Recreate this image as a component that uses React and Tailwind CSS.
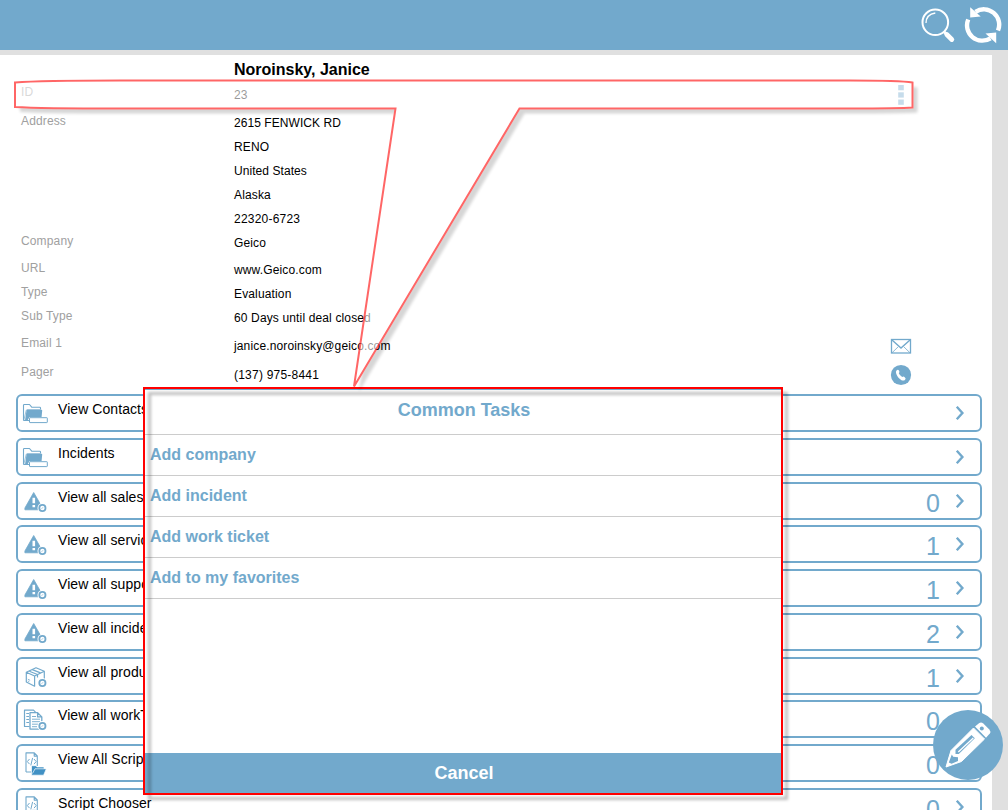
import React from 'react';

const details = [
  { label: '', value: 'Noroinsky, Janice', h: 'h-[26px]', bold: true },
  { label: 'ID', value: '23', h: 'h-[28px]', shift: '-mt-[3px]', icon: 'menu' },
  { label: 'Address', value: '2615 FENWICK RD', h: 'h-6', shift: '-mt-[2px]', tight: true },
  { label: '', value: 'RENO', h: 'h-6' },
  { label: '', value: 'United States', h: 'h-6', tight: true },
  { label: '', value: 'Alaska', h: 'h-6' },
  { label: '', value: '22320-6723', h: 'h-6', loose: true },
  { label: 'Company', value: 'Geico', h: 'h-[27px]', shift: '-mt-[2px]' },
  { label: 'URL', value: 'www.Geico.com', h: 'h-6', shift: '-mt-[2px]' },
  { label: 'Type', value: 'Evaluation', h: 'h-6', shift: '-mt-[2px]' },
  { label: 'Sub Type', value: '60 Days until deal closed', h: 'h-[28px]', shift: '-mt-[2px]' },
  { label: 'Email 1', value: 'janice.noroinsky@geico.com', h: 'h-[29px]', shift: '-mt-[3px]', icon: 'mail' },
  { label: 'Pager', value: '(137) 975-8441', h: 'h-[27px]', shift: '-mt-[3px]', icon: 'phone', loose: true },
];

const links = [
  { text: 'View Contacts', icon: 'folder' },
  { text: 'Incidents', icon: 'folder' },
  { text: 'View all sales', icon: 'alert', count: 0 },
  { text: 'View all service', icon: 'alert', count: 1 },
  { text: 'View all support', icon: 'alert', count: 1 },
  { text: 'View all incidents', icon: 'alert', count: 2 },
  { text: 'View all products', icon: 'box', count: 1 },
  { text: 'View all workTickets', icon: 'docs', count: 0 },
  { text: 'View All Scripts', icon: 'script', count: 0 },
  { text: 'Script Chooser', icon: 'script', count: 0 },
];

const tasks = ['Add company', 'Add incident', 'Add work ticket', 'Add to my favorites'];

function valueClass(d) {
  if (d.bold) return 'w-[656px] pt-px text-[16px] font-bold tracking-normal';
  if (d.tight) return 'w-[656px] tracking-[0.06px]';
  if (d.loose) return 'w-[656px] tracking-[0.22px]';
  return 'w-[656px]';
}

function Badge() {
  return (
    <>
      <circle cx="20.4" cy="18" r="4.9" fill="#fff" stroke="none" />
      <circle cx="20.4" cy="18" r="3.1" fill="#fff" strokeWidth="1.8" />
      <path d="M20.900 17.400l-1.200 1.300" strokeWidth="0.800" />
    </>
  );
}

function LinkIcon({ name }) {
  return (
    <svg className="h-[26px] w-[26px] shrink-0" viewBox="0 0 26 26" fill="none" stroke="#72a9cc" strokeLinejoin="round">
      {name === 'folder' && (
        <>
          <path d="M1.500 18.500V3.300q0-.8.8-.8h5.200l2.200 2.700h8q.8 0 .8.800v1.500M1.500 18.500h5.500" strokeWidth="1.100" />
          <path d="M1.800 18.200L4.200 8.500q.2-.8 1-.8h13.200" strokeWidth="0.700" />
          <path d="M5.300 7.800h14.200q.8 0 .7.800l-.6 6.500H7.500l-2 3.300H3L4.500 8.500q.1-.7.800-.7z" fill="#72a9cc" stroke="none" />
          <rect x="7.500" y="15.700" width="17.800" height="4.900" rx="0.500" fill="#fff" strokeWidth="1" />
        </>
      )}
      {name === 'alert' && (
        <>
          <path d="M11.700 2.500L19.200 15.500v4.300H2.900V18z" fill="#72a9cc" strokeWidth="0.800" />
          <path d="M10.500 7.800h2.600v5.500h-2.600zM10.500 15h2.600v2.300h-2.600z" fill="#fff" stroke="none" />
          <Badge />
        </>
      )}
      {name === 'box' && (
        <>
          <path d="M4.300 7.300L14 2.800l8.300 3.500-9.700 4.700zM4.300 7.300v9.700l8.300 4.200V11M22.300 6.300v8" strokeWidth="1.200" />
          <path d="M7.300 6.300l8.200 3.200v3M10.300 4.600l8.200 3.300" strokeWidth="1.200" />
          <path d="M5.800 14.200l2.300 1.100M5.800 16l1.500.7" strokeWidth="0.800" />
          <Badge />
        </>
      )}
      {name === 'docs' && (
        <>
          <path d="M7.500 18.500H2.500V2.200h9l2 2" strokeWidth="1.200" />
          <path d="M4.300 5.500h2.700M4.300 8.500h2.700M4.300 11.500h2.700M4.300 14.500h2.700" strokeWidth="1" />
          <path d="M8 4.700h7.600l4.200 4.200v12.200H8zM15.600 4.700v4.200h4.200" fill="#fff" strokeWidth="1.300" />
          <path d="M10 8.500h4M10 11.200h8M10 13.700h8M10 16.200h6M10 18.700h5" strokeWidth="0.900" />
          <Badge />
        </>
      )}
      {name === 'script' && (
        <>
          <path d="M4 20V.9h8.300l3 3v10M12.200.9v3.200h3.100M4 20h6" strokeWidth="1.100" />
          <path d="M7.500 7L5.300 9.600l2.200 2.500M12 7l2.200 2.600-2.200 2.500M10.600 5.900L8.800 13.400" strokeWidth="1" />
          <path d="M9.500 23V13.700h4.500l1 1.200h7v1.800l2.300.2-2.700 6.300H10z" fill="#4191c4" stroke="#fff" strokeWidth="0.700" />
          <path d="M10.500 21.500l2.500-4.700h9" stroke="#fff" strokeWidth="0.700" />
        </>
      )}
    </svg>
  );
}

function DetailIcon({ name }) {
  if (name === 'menu') {
    return (
      <svg className="-mt-[3px] h-[22px] w-[22px]" viewBox="0 0 22 22" fill="#72a9cc">
        <rect x="8.200" y="1" width="5.600" height="5.300" />
        <rect x="8.200" y="8.300" width="5.600" height="5.300" />
        <rect x="8.200" y="15.500" width="5.600" height="5.300" />
      </svg>
    );
  }
  if (name === 'mail') {
    return (
      <svg className="-mt-[3px] h-[22px] w-[22px]" viewBox="0 0 22 22" fill="none" stroke="#72a9cc">
        <rect x="1.500" y="4.500" width="19" height="13.500" strokeWidth="1.300" />
        <path d="M2 5l9 8 9-8" strokeWidth="1.400" />
        <path d="M2 17.800l6.200-6M20 17.800l-6.200-6" strokeWidth="0.800" />
      </svg>
    );
  }
  return (
    <svg className="-mt-[3px] h-[22px] w-[22px]" viewBox="0 0 22 22">
      <circle cx="11" cy="11" r="10.100" fill="#72a9cc" />
      <path d="M6.500 6.400q1.500-1.300 2.600.3.900 1.400-.3 2.600 1 2.400 3.400 3.800 1.300-1 2.500.1 1.700 1.300.4 2.500-1.400 1.400-3.600.5Q7.300 13.700 6.100 9.300q-.5-1.800.4-2.900z" fill="#fff" />
    </svg>
  );
}

const callout = 'M15 82.500Q40 80.500 120 80.500H850Q900 80.500 912.500 82.500V107.500Q900 108.500 850 108.500H519.500L354 386.500 395.500 108.500H120Q40 108.500 15 107Z';

export default function App() {
  return (
    <div className="relative h-[810px] w-[1008px] overflow-hidden bg-[#e0e0e0] font-['Liberation_Sans',Arial,sans-serif] text-black">
      <header className="flex h-[50px] items-center justify-end gap-[8px] bg-[#72a9cc] pr-[6px]">
        <svg className="h-[38px] w-[38px]" viewBox="0 0 38 38" fill="none" stroke="#fff">
          <circle cx="17.300" cy="16.300" r="12.800" strokeWidth="2" />
          <path d="M8 17q.1-8.500 9.300-10" strokeWidth="1.300" />
          <path d="M26.300 26l2.500 2.500" strokeWidth="3" />
          <path d="M28.800 28.500l5 5" strokeWidth="4.800" strokeLinecap="round" />
        </svg>
        <svg className="h-[38px] w-[38px]" viewBox="0 0 38 38" fill="none" stroke="#fff">
          <path d="M11.500 5.800A15.300 15.300 0 0 1 34 24.500" strokeWidth="4.400" />
          <path d="M26.500 32.300A15.300 15.300 0 0 1 4.200 13.500" strokeWidth="4.400" />
          <path d="M6.200 1.200L6.200 11.500 16.700 10.500z M32.200 37.200L32.200 26.500 21.500 27.500z" fill="#fff" stroke="none" />
        </svg>
      </header>

      <main className="mt-[5px] h-[755px] w-[992px] bg-white pt-[6px]">
        <section className="pl-[21px]">
          {details.map((d) => (
            <div key={d.value} className={`flex items-start text-[12px] leading-4 tracking-[0.14px] ${d.h}`}>
              <div className={`w-[213px] shrink-0 text-[#a0a0a0] ${d.shift || ''}`}>{d.label}</div>
              <div className={valueClass(d)}>{d.value}</div>
              {d.icon && <DetailIcon name={d.icon} />}
            </div>
          ))}
        </section>

        <section className="flex flex-col gap-[5.75px] pl-4">
          {links.map((l) => (
            <div key={l.text} className="flex h-[38px] w-[966px] shrink-0 rounded-[6px] border-2 border-[#72a9cc] pl-[4px]">
              <div className="pt-[6px]"><LinkIcon name={l.icon} /></div>
              <div className="flex-1 whitespace-nowrap pl-[10px] pt-[4px] text-[14px] leading-[18px] tracking-[0.07px]">{l.text}</div>
              <div className="pt-[4px] text-[25px] leading-[30px] text-[#72a9cc]">{l.count}</div>
              <svg className="ml-[15px] mr-[15px] mt-[10px] h-[14px] w-[10px]" viewBox="0 0 10 14" fill="none" stroke="#72a9cc" strokeWidth="2.400">
                <path d="M1.800 .8l5.600 6.200-5.600 6.200" />
              </svg>
            </div>
          ))}
        </section>
      </main>

      <button className="absolute left-[933px] top-[710px] h-[70px] w-[70px] rounded-full bg-[#72a9cc]">
        <svg className="h-[70px] w-[70px]" viewBox="0 0 70 70">
          <path d="M13 57L18 40.500 40.500 18 51.500 29 28.500 51.500z" fill="#fff" stroke="#fff" strokeLinejoin="round" />
          <path d="M42 16.500l4.300-3.500q2-1.200 4 .5l6 6q1.800 2 .5 4l-3.800 4.300z" fill="#fff" />
          <circle cx="48.800" cy="18.500" r="2" fill="#72a9cc" />
          <path d="M22.500 41.500v-1.800L38.500 25l3.300 3.300L25.800 44h-3.300z" fill="#72a9cc" />
          <path d="M25.300 42L40.300 28" stroke="#fff" strokeWidth="1.300" />
          <path d="M18.800 44.500L15.800 52.500l2.800 1.300 6.400-2.800v-3.800l-4.800-.5z" fill="#72a9cc" />
        </svg>
      </button>

      <div className="absolute left-[143px] top-[387px] h-[408px] w-[640px]">
        <div className="flex h-full flex-col border-2 border-transparent bg-white text-[#72a9cc]">
          <h2 className="h-[46px] border-b border-t border-[#ccc] border-t-[#72a9cc] pl-[2px] text-center text-[18px] font-bold leading-[40px]">Common Tasks</h2>
          <ul className="flex-1">
            {tasks.map((t) => (
              <li key={t} className="h-[41px] border-b border-[#ccc] pl-[5px] text-[16px] font-bold leading-[39px]">{t}</li>
            ))}
          </ul>
          <button className="h-10 bg-[#72a9cc] pl-[2px] text-[18px] font-bold text-white">Cancel</button>
        </div>
        <div className="absolute inset-0 translate-x-[5px] translate-y-[5px] border-[3px] border-black/25 blur-[1.5px]" />
        <div className="absolute inset-0 border-2 border-[#ff0000]" />
      </div>

      <svg className="pointer-events-none absolute inset-0 h-[810px] w-[1008px]" viewBox="0 0 1008 810">
        <defs>
          <mask id="outside" maskUnits="userSpaceOnUse" x="0" y="0" width="1008" height="810">
            <rect width="1008" height="810" fill="#fff" />
            <path d={callout} fill="#000" stroke="#000" strokeWidth="2" />
          </mask>
          <filter id="soft" filterUnits="userSpaceOnUse" x="0" y="50" width="1008" height="370">
            <feGaussianBlur stdDeviation="1.800" />
          </filter>
        </defs>
        <g mask="url(#outside)">
          <path d={callout} transform="translate(5 5)" fill="#000" opacity="0.160" filter="url(#soft)" />
        </g>
        <path d={callout} fill="#fff" fillOpacity="0.600" stroke="#f00" strokeOpacity="0.600" strokeWidth="2" />
      </svg>
    </div>
  );
}
